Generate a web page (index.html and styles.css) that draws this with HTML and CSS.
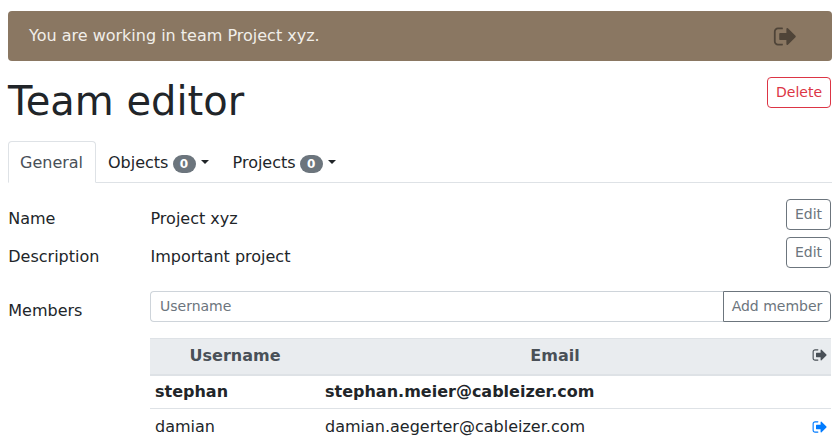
FILE: index.html
```html
<!DOCTYPE html>
<html lang="en">
<head>
<meta charset="utf-8">
<title>Team editor</title>
<link rel="stylesheet" href="styles.css">
</head>
<body>
<svg class="defs" width="0" height="0" aria-hidden="true"><symbol id="signout" viewBox="0 0 1792 1792"><path d="M704 1440q0 4 1 20t.5 26.5-3 23.5-10 19.5-20.5 6.5h-320q-119 0-203.5-84.5t-84.5-203.5v-704q0-119 84.5-203.5t203.5-84.5h320q13 0 22.5 9.5t9.5 22.5q0 4 1 20t.5 26.5-3 23.5-10 19.5-20.5 6.5h-320q-66 0-113 47t-47 113v704q0 66 47 113t113 47h312l11.5 1 11.5 3 8 5.5 7 9 2 13.5zm928-544q0 26-19 45l-544 544q-19 19-45 19t-45-19-19-45v-288h-448q-26 0-45-19t-19-45v-384q0-26 19-45t45-19h448v-288q0-26 19-45t45-19 45 19l544 544q19 19 19 45z"/></symbol></svg>
<div class="banner">
  <span>You are working in team Project xyz.</span>
  <svg class="banner-icon"><use href="#signout"/></svg>
</div>
<header class="title-row">
  <h1>Team editor</h1>
  <button class="btn btn-delete">Delete</button>
</header>
<nav class="tabs">
  <a class="tab active">General</a>
  <a class="tab">Objects <span class="badge">0</span><i class="caret"></i></a>
  <a class="tab">Projects <span class="badge">0</span><i class="caret"></i></a>
</nav>
<section class="row first">
  <div class="label">Name</div>
  <div class="value">Project xyz</div>
  <button class="btn btn-edit">Edit</button>
</section>
<section class="row">
  <div class="label">Description</div>
  <div class="value">Important project</div>
  <button class="btn btn-edit">Edit</button>
</section>
<section class="members">
  <div class="label">Members</div>
  <div class="members-body">
    <div class="input-group">
      <input class="input" placeholder="Username">
      <button class="btn btn-add">Add member</button>
    </div>
    <table class="table">
      <thead>
        <tr><th class="col-user">Username</th><th class="col-mail">Email</th><th class="col-act"><svg class="ico head"><use href="#signout"/></svg></th></tr>
      </thead>
      <tbody>
        <tr class="me"><td>stephan</td><td>stephan.meier@cableizer.com</td><td></td></tr>
        <tr class="other"><td>damian</td><td>damian.aegerter@cableizer.com</td><td class="col-act"><svg class="ico link"><use href="#signout"/></svg></td></tr>
      </tbody>
    </table>
  </div>
</section>
</body>
</html>
```
FILE: styles.css
```css
* { box-sizing: border-box; }
html, body { height: 445px; overflow: hidden; }
body {
  margin: 0;
  padding: 11px 8px 0;
  font-family: "DejaVu Sans", sans-serif;
  font-size: 16px;
  line-height: 24px;
  color: #212529;
  background: #fff;
}
.defs { position: absolute; }
.banner {
  display: flex;
  justify-content: space-between;
  align-items: center;
  height: 50px;
  padding: 0 34px 0 21px;
  background: #8a7762;
  border-radius: 4px;
  color: #f1eee9;
}
.banner-icon { width: 25px; height: 25px; fill: #4f4438; }
.title-row {
  display: flex;
  justify-content: space-between;
  align-items: flex-start;
  margin-top: 16px;
}
h1 { margin: 0; font-size: 40px; font-weight: 400; line-height: 48px; }
.btn {
  font: inherit;
  font-size: 14px;
  line-height: 21px;
  background: #fff;
  border: 1px solid #6c757d;
  border-radius: 4px;
  color: #6c757d;
  padding: 4px 8px;
  margin: 0;
}
.btn-delete { border-color: #dc3545; color: #dc3545; margin-right: 1px; }
.tabs {
  display: flex;
  margin-top: 16px;
  height: 42px;
  border-bottom: 1px solid #dee2e6;
}
.tab {
  height: 42px;
  padding: 9px 11px 7px;
  border: 1px solid transparent;
  border-radius: 4px 4px 0 0;
  color: #212529;
  white-space: nowrap;
}
.tab.active { width: 88px; color: #495057; background: #fff; border-color: #dee2e6 #dee2e6 #fff; }
.badge {
  display: inline-block;
  min-width: 23px;
  margin-left: -1px;
  padding: 3px 7px;
  font-size: 12px;
  font-weight: 700;
  line-height: 12px;
  text-align: center;
  vertical-align: baseline;
  color: #fff;
  background: #6c757d;
  border-radius: 10px;
}
.caret {
  display: inline-block;
  margin-left: 5px;
  vertical-align: 4px;
  border-top: 4px solid #212529;
  border-left: 4px solid transparent;
  border-right: 4px solid transparent;
}
.row { display: flex; align-items: flex-start; height: 38px; }
.row.first { margin-top: 16px; }
.label { width: 142px; flex: none; padding: 8px 0 0 0.25px; }
.value { flex: 1; padding: 8px 0 0 0.5px; }
.btn-edit { width: 45px; margin-right: 1px; }
.members { display: flex; margin-top: 16px; }
.members-body { flex: 1; margin-right: 1px; }
.input-group { display: flex; height: 31px; }
.input {
  flex: 1;
  min-width: 0;
  height: 31px;
  padding: 3px 9px 5px;
  font: inherit;
  font-size: 14px;
  border: 1px solid #ced4da;
  border-right: 0;
  border-radius: 4px 0 0 4px;
  color: #495057;
}
.input::placeholder { color: #6c757d; opacity: 1; }
.btn-add { width: 108px; flex: none; padding: 4px 0; border-radius: 0 4px 4px 0; white-space: nowrap; }
.table {
  width: 100%;
  margin-top: 16px;
  border-collapse: collapse;
  table-layout: fixed;
}
th {
  height: 36px;
  padding: 0 5px;
  background: #e9ecef;
  color: #495057;
  border-top: 1px solid #dee2e6;
  border-bottom: 2px solid #dee2e6;
  font-size: 16px;
  text-align: center;
}
td { height: 34px; padding: 0 5px; border-bottom: 1px solid #dee2e6; }
.other td { height: 36px; border-bottom: 0; }
.col-user { width: 170px; }
th.col-act, td.col-act { width: 41px; padding: 0 3.5px 0 0; text-align: right; }
.me td { font-weight: 700; }
.ico { width: 16px; height: 16px; fill: #495057; vertical-align: -3px; }
.ico.head { vertical-align: -2px; }
.ico.link { fill: #007bff; }
```
